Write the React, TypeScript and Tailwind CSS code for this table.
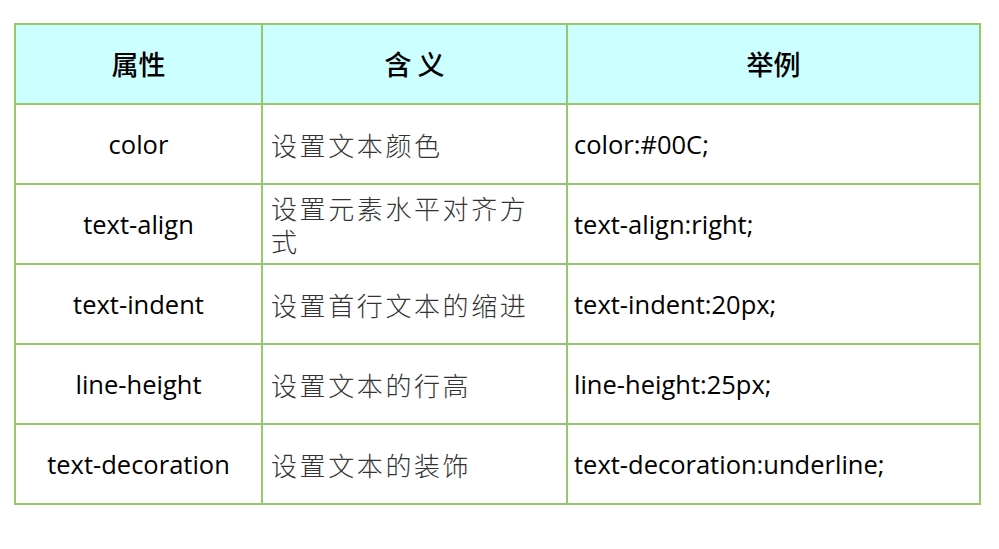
import React from "react";

const rows: { prop: string; meaning: string; example: string }[] = [
  { prop: "color", meaning: "设置文本颜色", example: "color:#00C;" },
  { prop: "text-align", meaning: "设置元素水平对齐方式", example: "text-align:right;" },
  { prop: "text-indent", meaning: "设置首行文本的缩进", example: "text-indent:20px;" },
  { prop: "line-height", meaning: "设置文本的行高", example: "line-height:25px;" },
  { prop: "text-decoration", meaning: "设置文本的装饰", example: "text-decoration:underline;" },
];

const latin = "font-['Open_Sans','Noto_Sans_CJK_SC',sans-serif]";
const cjk = "font-['Noto_Sans_CJK_SC',sans-serif]";

export default function App() {
  return (
    <div className="w-[999px] h-[549px] bg-white pt-[23px] pl-[14px]">
      <table className="border-collapse border-2 border-[#96c86e] table-fixed w-[965px]">
        <colgroup>
          <col className="w-[247px]" />
          <col className="w-[305px]" />
          <col className="w-[413px]" />
        </colgroup>
        <thead>
          <tr className="h-[80px] bg-[#ccffff]">
            <th className={`border-2 border-[#96c86e] ${cjk} text-[27px] font-medium text-black text-center`}>属性</th>
            <th className={`border-2 border-[#96c86e] ${cjk} text-[27px] font-medium text-black text-center`}>含 义</th>
            <th className={`border-2 border-[#96c86e] ${cjk} text-[27px] font-medium text-black text-center`}>举例</th>
          </tr>
        </thead>
        <tbody>
          {rows.map((r) => (
            <tr key={r.prop} className="h-[80px]">
              <td className={`border-2 border-[#96c86e] ${latin} text-[25.5px] text-black text-center align-middle`}>{r.prop}</td>
              <td className={`border-2 border-[#96c86e] ${cjk} text-[26px] font-light tracking-[2.6px] leading-[33px] text-[#333333] pl-[8px] pr-[10px] align-middle`}>{r.meaning}</td>
              <td className={`border-2 border-[#96c86e] ${latin} text-[25.5px] text-black pl-[6px] align-middle`}>{r.example}</td>
            </tr>
          ))}
        </tbody>
      </table>
    </div>
  );
}
